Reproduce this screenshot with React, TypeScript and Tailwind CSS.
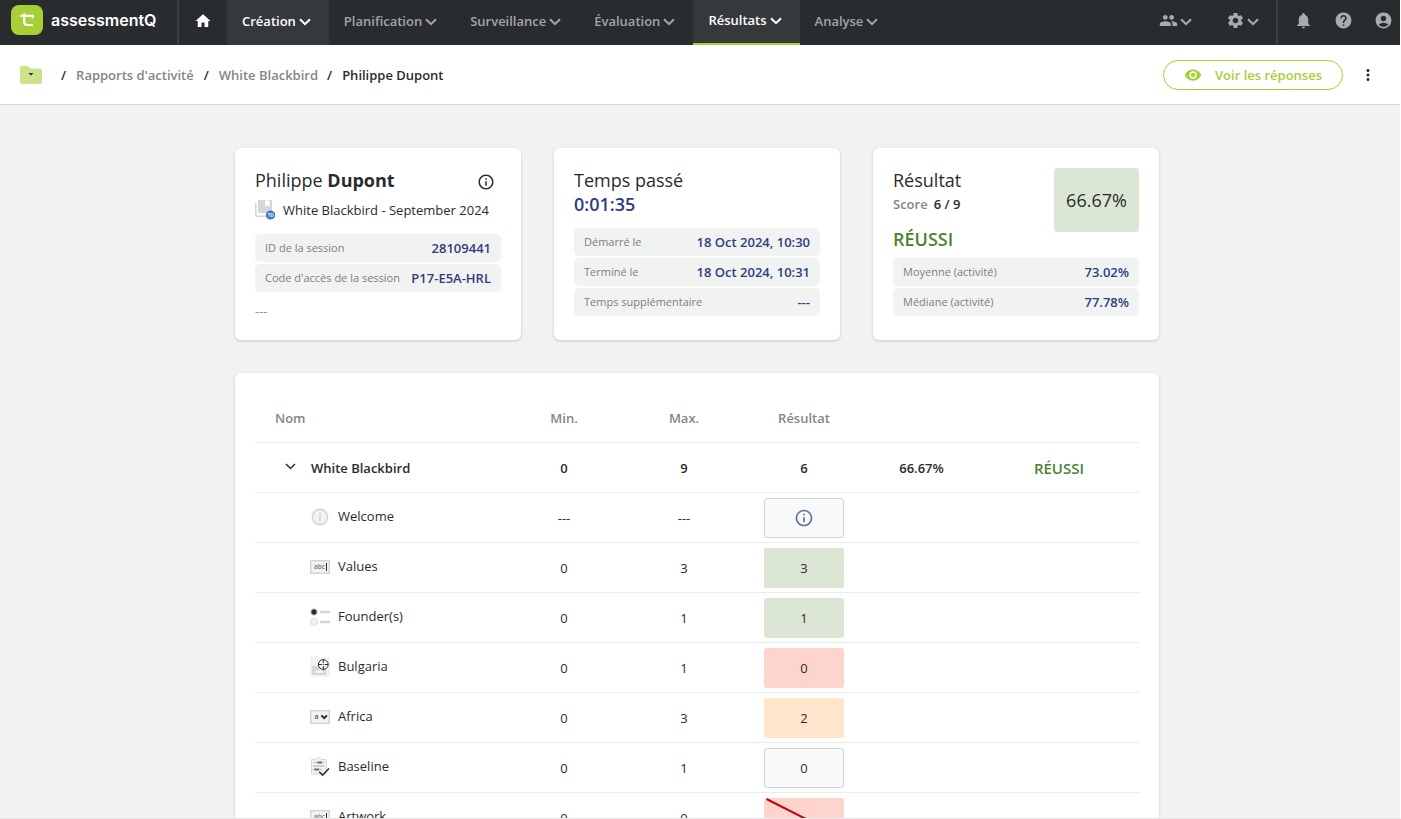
import type { ReactNode } from 'react';
import {
  MdAccountCircle,
  MdGroup,
  MdHelp,
  MdHome,
  MdInfoOutline,
  MdMoreVert,
  MdNotifications,
  MdSettings,
  MdVisibility,
} from 'react-icons/md';

function Chevron({ className = '' }: { className?: string }) {
  return (
    <svg viewBox="0 0 12 8" className={`h-2 w-3 shrink-0 ${className}`} fill="none" stroke="currentColor" strokeWidth="2" aria-hidden="true">
      <path d="M1 1.2 6 6.2 11 1.2" />
    </svg>
  );
}

type NavState = 'idle' | 'open' | 'current';

const navStates: Record<NavState, string> = {
  idle: 'text-[#a3a5a6]',
  open: 'bg-[#36393b] text-white',
  current: 'border-b-2 border-[#a7cf38] bg-[#36393b] text-white',
};

const nav: { label: string; state: NavState }[] = [
  { label: 'Création', state: 'open' },
  { label: 'Planification', state: 'idle' },
  { label: 'Surveillance', state: 'idle' },
  { label: 'Évaluation', state: 'idle' },
  { label: 'Résultats', state: 'current' },
  { label: 'Analyse', state: 'idle' },
];

function TopBar() {
  return (
    <header className="flex h-[45px] shrink-0 items-stretch bg-[#292c2e] text-[#a9abac]">
      <a href="#accueil" className="flex w-[179px] items-center gap-2 border-r-2 border-[#3e4142] pb-[5px] pl-[11px] text-white">
        <svg viewBox="0 0 32 30" className="h-[30px] w-8" aria-hidden="true">
          <rect width="32" height="30" rx="8" fill="#a7cf38" />
          <path d="M13.2 8.500v8.300q0 3.200 3.200 3.200h5.400M9.500 10.800h12.300v2.400" fill="none" stroke="#fff" strokeWidth="2.2" />
        </svg>
        <span className="font-['Inter',sans-serif] text-base font-semibold">assessmentQ</span>
      </a>
      <nav aria-label="Navigation principale" className="flex">
        <a href="#home" aria-label="Accueil" className="flex w-12 items-center justify-center pb-1 text-white">
          <MdHome className="size-[18px]" />
        </a>
        {nav.map(({ label, state }) => (
          <button key={label} type="button" className={`flex items-center gap-[3px] px-[15px] pb-1 font-semibold ${navStates[state]}`}>
            {label}
            <Chevron className="mt-[3px] mr-[3px]" />
          </button>
        ))}
      </nav>
      <div className="ml-auto flex">
        <button type="button" aria-label="Utilisateurs" className="flex items-center gap-[2px] px-[17px] pb-1">
          <MdGroup className="size-[19px]" />
          <Chevron className="mt-[3px]" />
        </button>
        <button type="button" aria-label="Paramètres" className="flex items-center gap-[2px] px-[17px] pb-1">
          <MdSettings className="size-[19px]" />
          <Chevron className="mt-[3px]" />
        </button>
        <div className="flex border-l-2 border-[#3e4142] pr-[7px] pb-1 pl-[5px]">
          <button type="button" aria-label="Notifications" className="flex w-10 items-center justify-center">
            <MdNotifications className="size-[19px]" />
          </button>
          <button type="button" aria-label="Aide" className="flex w-10 items-center justify-center">
            <MdHelp className="size-[19px]" />
          </button>
          <button type="button" aria-label="Compte" className="-mr-[10px] flex w-10 items-center justify-center">
            <MdAccountCircle className="size-[19px]" />
          </button>
        </div>
      </div>
    </header>
  );
}

function Breadcrumb() {
  return (
    <div className="flex h-[60px] shrink-0 items-center border-b border-[#d4d6d6] bg-white pr-[23px] pl-5">
      <nav aria-label="Fil d'Ariane" className="flex items-center font-semibold text-[#858585]">
        <button type="button" aria-label="Dossiers" className="mr-[19px]">
          <svg viewBox="0 0 22 18" className="h-[18px] w-[22px]" aria-hidden="true">
            <path d="M2 0h6l2.500 2.500H20a2 2 0 0 1 2 2V16a2 2 0 0 1-2 2H2a2 2 0 0 1-2-2V2a2 2 0 0 1 2-2Z" fill="#cbe48b" />
            <path d="M8.500 7h5l-2.500 2.500Z" fill="#292c2e" />
          </svg>
        </button>
        <span className="text-[#292c2e]">/</span>
        <a href="#rapports" className="mx-[10px]">Rapports d'activité</a>
        <span className="text-[#292c2e]">/</span>
        <a href="#white-blackbird" className="mr-[9px] ml-[10px]">White Blackbird</a>
        <span className="text-[#292c2e]">/</span>
        <span className="ml-[10px] text-[#292c2e]">Philippe Dupont</span>
      </nav>
      <button type="button" className="ml-auto flex h-[30px] items-center gap-[13px] rounded-full border border-[#a7cf38] px-5 font-semibold text-[#a7cf38]">
        <MdVisibility className="size-[18px]" />
        Voir les réponses
      </button>
      <button type="button" aria-label="Plus d'options" className="ml-4 text-[#292c2e]">
        <MdMoreVert className="size-[18px]" />
      </button>
    </div>
  );
}

function Card({ children }: { children: ReactNode }) {
  return <section className="h-48 rounded-md bg-white p-5 shadow-[0_1px_3px_rgba(0,0,0,0.18)]">{children}</section>;
}

function Facts({ rows, className }: { rows: [string, string][]; className: string }) {
  return (
    <dl className={`flex flex-col gap-[2px] ${className}`}>
      {rows.map(([label, value]) => (
        <div key={label} className="flex h-7 items-center justify-between rounded-[5px] bg-[#f1f3f3] px-[10px] whitespace-nowrap">
          <dt className="text-[11px] text-[#7d7d7d]">{label}</dt>
          <dd className="font-semibold text-[#2f3d7e]">{value}</dd>
        </div>
      ))}
    </dl>
  );
}

function SummaryCards() {
  return (
    <div className="grid grid-cols-3 gap-[33px]">
      <Card>
        <div className="flex h-6 items-center justify-between">
          <h1 className="text-lg">
            Philippe <strong className="font-bold">Dupont</strong>
          </h1>
          <button type="button" aria-label="Informations" className="mt-1 mr-[6px]">
            <MdInfoOutline className="size-[18px]" />
          </button>
        </div>
        <p className="mt-[6px] flex h-6 items-center gap-2">
          <svg viewBox="0 0 20 20" className="size-5" aria-hidden="true">
            <path d="M.8 3v12.200q0 1 1 1H14" fill="none" stroke="#d5d7d7" strokeWidth="1.6" />
            <rect x="3" y="-1" width="14" height="14" rx="1.5" fill="#d5d7d7" />
            <path d="M10 .5h4.500V7l-2.200-1.400L10 7Z" fill="#fff" />
            <circle cx="15.500" cy="15" r="4.6" fill="#3b78d0" />
            <path d="M13 13.500h2.400m-1.200 0v3.200M16.200 13.500v3.200m0-3.200q2.200 0 2.200 1.600t-2.200 1.600" fill="none" stroke="#fff" strokeWidth=".8" />
          </svg>
          White Blackbird - September 2024
        </p>
        <Facts
          className="mt-3"
          rows={[
            ['ID de la session', '28109441'],
            ["Code d'accès de la session", 'P17-E5A-HRL'],
          ]}
        />
        <p className="mt-[9px] text-[#8f9193]">---</p>
      </Card>

      <Card>
        <h2 className="text-lg leading-6">Temps passé</h2>
        <p className="text-lg leading-6 font-semibold text-[#2f3d7e]">0:01:35</p>
        <Facts
          className="mt-3"
          rows={[
            ['Démarré le', '18 Oct 2024, 10:30'],
            ['Terminé le', '18 Oct 2024, 10:31'],
            ['Temps supplémentaire', '---'],
          ]}
        />
      </Card>

      <Card>
        <div className="flex items-start justify-between">
          <div>
            <h2 className="text-lg leading-6">Résultat</h2>
            <p className="flex h-6 items-center gap-[6px] font-semibold">
              <span className="text-[#858585]">Score</span>6 / 9
            </p>
            <p className="mt-[11px] text-lg leading-6 font-semibold text-[#4d8233]">RÉUSSI</p>
          </div>
          <div className="flex h-16 w-[85px] items-center justify-center rounded-[3px] bg-[#dbe6d4] text-lg">66.67%</div>
        </div>
        <Facts
          className="mt-[7px]"
          rows={[
            ['Moyenne (activité)', '73.02%'],
            ['Médiane (activité)', '77.78%'],
          ]}
        />
      </Card>
    </div>
  );
}

function PageIcon() {
  return (
    <>
      <circle cx="10" cy="10" r="7.6" fill="#f1f3f3" stroke="#d5d7d7" strokeWidth="1.6" />
      <path d="M10 9v5M10 5.8v1.7" stroke="#d5d7d7" strokeWidth="2" />
    </>
  );
}

function TextIcon() {
  return (
    <>
      <rect x=".7" y="3.7" width="18.600" height="12.600" fill="#f1f3f3" stroke="#d0d3d3" strokeWidth="1.4" />
      <text x="4" y="12.300" fontSize="6.500" fontWeight="600" fill="#75787a">abc</text>
      <path d="M16.500 6v8" stroke="#292c2e" />
    </>
  );
}

function ChoiceIcon() {
  return (
    <>
      <circle cx="4" cy="5" r="3.6" fill="#f1f3f3" stroke="#d5d7d7" strokeWidth=".8" />
      <circle cx="4" cy="5" r="2.7" fill="#292c2e" />
      <circle cx="4" cy="15" r="3.6" fill="#f1f3f3" stroke="#d5d7d7" strokeWidth=".8" />
      <path d="M10 5h10M10 15h10" stroke="#d5d7d7" strokeWidth="2.4" />
    </>
  );
}

function HotspotIcon() {
  return (
    <>
      <path d="M0 0h20v20H0Z" fill="#f1f3f3" />
      <path d="M2 9h14v9H2Z" fill="#d5d7d7" />
      <path d="m4.500 15.800 2.300-3 2 1.700 1.900-2.800 3 4.100Z" fill="#f8f9f9" />
      <circle cx="13.300" cy="7.500" r="4.900" fill="#f8f9f9" stroke="#292c2e" />
      <path d="M13.300 2.500V6m0 3v3.500M8.300 7.500h3.500m3 0h3.500M12.800 7.500h1" stroke="#292c2e" />
    </>
  );
}

function SelectIcon() {
  return (
    <>
      <rect x=".7" y="3.7" width="18.600" height="12.600" fill="#f1f3f3" stroke="#d0d3d3" strokeWidth="1.4" />
      <text x="4.600" y="12.300" fontSize="7" fontWeight="600" fill="#55585a">a</text>
      <path d="m11.400 8.400 2.800 2.800L17 8.400" fill="none" stroke="#292c2e" strokeWidth="2" />
    </>
  );
}

function SurveyIcon() {
  return (
    <>
      <path d="M1.500 2.500H6q.5-2 2.700-2t2.800 2h4.800V17H1.500Z" fill="#f1f3f3" stroke="#d5d7d7" />
      <path d="M3 5.500h11M3 9h11M3 12.500h9" stroke="#c4c7c7" strokeWidth="1.6" />
      <path d="M7.500 5.500H12M4.500 12.500H9" stroke="#6f7274" strokeWidth="2" />
      <path d="m9.300 14.800 3.200 3.400 6.500-6.700" fill="none" stroke="#292c2e" strokeWidth="1.6" />
    </>
  );
}

type Tone = 'neutral' | 'good' | 'bad' | 'partial';

const tones: Record<Tone, string> = {
  neutral: 'border border-[#d2d5d6] bg-[#f8fafa]',
  good: 'bg-[#dbe6d4]',
  bad: 'bg-[#fed5cc]',
  partial: 'bg-[#fee5cc]',
};

const items: { name: string; icon: ReactNode; min: string; max: string; tone: Tone; result: ReactNode }[] = [
  { name: 'Welcome', icon: <PageIcon />, min: '---', max: '---', tone: 'neutral', result: <MdInfoOutline className="size-5 text-[#62719d]" aria-label="Information" /> },
  { name: 'Values', icon: <TextIcon />, min: '0', max: '3', tone: 'good', result: '3' },
  { name: 'Founder(s)', icon: <ChoiceIcon />, min: '0', max: '1', tone: 'good', result: '1' },
  { name: 'Bulgaria', icon: <HotspotIcon />, min: '0', max: '1', tone: 'bad', result: '0' },
  { name: 'Africa', icon: <SelectIcon />, min: '0', max: '3', tone: 'partial', result: '2' },
  { name: 'Baseline', icon: <SurveyIcon />, min: '0', max: '1', tone: 'neutral', result: '0' },
  {
    name: 'Artwork',
    icon: <TextIcon />,
    min: '0',
    max: '0',
    tone: 'bad',
    result: (
      <svg viewBox="0 0 80 40" className="h-10 w-20" aria-label="Non comptabilisé">
        <path d="m2.500 1 75 38" stroke="#c4000f" strokeWidth="2" />
      </svg>
    ),
  },
];

function ResultsTable() {
  return (
    <section className="mt-[33px] rounded-md bg-white p-5 shadow-[0_1px_3px_rgba(0,0,0,0.18)]">
      <table className="w-full table-fixed border-separate border-spacing-0 text-center [&_td]:border-b [&_td]:border-[#ebecec] [&_th]:border-b [&_th]:border-[#ebecec] [&_tr]:h-[50px]">
        <colgroup>
          <col />
          <col className="w-[120px]" />
          <col className="w-[120px]" />
          <col className="w-[120px]" />
          <col className="w-[115px]" />
          <col className="w-[160px]" />
        </colgroup>
        <thead className="text-[#858585]">
          <tr>
            <th scope="col" className="pl-5 text-left font-semibold">Nom</th>
            <th scope="col" className="font-semibold">Min.</th>
            <th scope="col" className="font-semibold">Max.</th>
            <th scope="col" className="font-semibold">Résultat</th>
            <td />
            <td />
          </tr>
        </thead>
        <tbody>
          <tr className="font-semibold">
            <td className="pl-[30px]">
              <button type="button" aria-expanded="true" className="flex items-center gap-[15px]">
                <svg viewBox="0 0 11 7" className="mb-[3px] h-[7px] w-[11px]" fill="none" stroke="currentColor" strokeWidth="1.5" aria-hidden="true">
                  <path d="M1 1 5.500 5.500 10 1" />
                </svg>
                White Blackbird
              </button>
            </td>
            <td>0</td>
            <td>9</td>
            <td>6</td>
            <td>66.67%</td>
            <td className="text-[15px] text-[#4d8233]">RÉUSSI</td>
          </tr>
          {items.map(({ name, icon, min, max, tone, result }) => (
            <tr key={name}>
              <td className="pb-[2px] pl-[55px]">
                <span className="flex items-center gap-2">
                  <svg viewBox="0 0 20 20" className="size-5" aria-hidden="true">{icon}</svg>
                  <span className="pb-[2px]">{name}</span>
                </span>
              </td>
              <td>{min}</td>
              <td>{max}</td>
              <td>
                <span className={`mx-auto flex h-10 w-20 items-center justify-center rounded-[3px] ${tones[tone]}`}>{result}</span>
              </td>
              <td />
              <td />
            </tr>
          ))}
        </tbody>
      </table>
    </section>
  );
}

export default function App() {
  return (
    <div className="flex h-screen flex-col overflow-hidden border-r border-b border-r-white border-b-[#e8e8e8] bg-[#f1f3f3] font-['Open_Sans','Noto_Sans',sans-serif] text-[13px] leading-5 text-[#292c2e]">
      <TopBar />
      <Breadcrumb />
      <main className="min-h-0 grow overflow-y-auto pt-[43px] pr-[6px] [scrollbar-width:none]">
        <div className="mx-auto max-w-[924px]">
          <SummaryCards />
          <ResultsTable />
        </div>
      </main>
    </div>
  );
}
